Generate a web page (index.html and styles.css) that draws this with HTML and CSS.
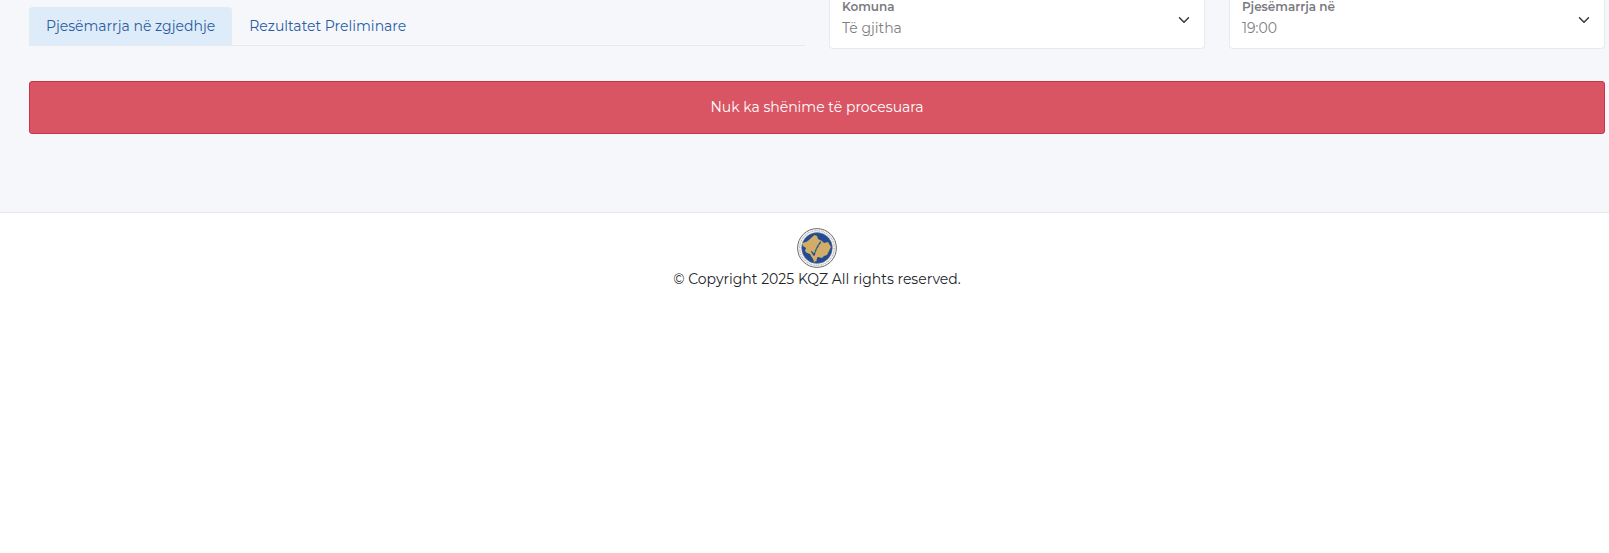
FILE: index.html
```
<!DOCTYPE html>
<html lang="sq">
<head>
<meta charset="utf-8">
<meta name="viewport" content="width=device-width, initial-scale=1">
<title>KQZ</title>
<link rel="stylesheet" href="styles.css">
</head>
<body>
<main class="content">
  <div class="toolbar">
    <nav class="tabs">
      <a class="tab tab-active" href="#pjesemarrja">Pjesëmarrja në zgjedhje</a>
      <a class="tab" href="#rezultatet">Rezultatet Preliminare</a>
    </nav>
    <div class="field">
      <select class="field-select" id="komuna"><option>Të gjitha</option></select>
      <label class="field-label" for="komuna">Komuna</label>
      <svg class="chevron" viewBox="0 0 16 16" aria-hidden="true"><path d="m2 5 6 6 6-6"/></svg>
    </div>
    <div class="field">
      <select class="field-select" id="ora"><option>19:00</option></select>
      <label class="field-label" for="ora">Pjesëmarrja në</label>
      <svg class="chevron" viewBox="0 0 16 16" aria-hidden="true"><path d="m2 5 6 6 6-6"/></svg>
    </div>
  </div>
  <div class="alert" role="alert">Nuk ka shënime të procesuara</div>
</main>
<footer class="footer">
  <svg class="logo" viewBox="0 0 40 40" role="img" aria-label="KQZ">
    <circle cx="20" cy="20" r="19.4" fill="#f5f5f5" stroke="#6c6e72" stroke-width="1"/>
    <circle cx="20" cy="20" r="17.3" fill="none" stroke="#b9b9bb" stroke-width="1.4" stroke-dasharray="1.2 .8 .7 .9"/>
    <circle cx="20" cy="20" r="15.4" fill="#234b91" stroke="#777f8f" stroke-width=".5"/>
    <path fill="#d1ad68" d="M17.5 7l2.5 1 1 3 4 2 2 2 4-1 3 5-2 4-2 4-3 1-2 2-4-1-1 1-.5 3-2.500 1-1-3-2-3-1-2-3-1-2-2 1-3-3-2-1-3 4-1 3-2 2-2z"/>
    <path fill="#234b91" d="M13.800 23.500l1.200-.5 2.300 3 -.5 2z"/>
    <path fill="none" stroke="#234b91" stroke-width="1.300" stroke-dasharray="3.500 .4" d="M17 27.500Q19 20 24 13.500"/>
  </svg>
  <div>© Copyright 2025 KQZ All rights reserved.</div>
</footer>
</body>
</html>
```
FILE: styles.css
```
* { box-sizing: border-box; }
body {
  margin: 0;
  background: #fff;
  color: #212529;
  font: 14px/22px Montserrat, Inter, sans-serif;
}
.content {
  padding: 0 4px 78px 29px;
  background: #f5f7fb;
  border-bottom: 1px solid #e6e8ee;
}
.toolbar {
  display: grid;
  grid-template-columns: repeat(4, minmax(0, 1fr));
  column-gap: 24px;
  align-items: start;
}
.tabs {
  grid-column: span 2;
  display: flex;
  margin-top: 7px;
  border-bottom: 1px solid #e5ebf0;
}
.tab {
  padding: 7px 16px 8px;
  border: 1px solid transparent;
  border-bottom: 0;
  border-radius: 4px 4px 0 0;
  color: #2a5ca5;
  text-decoration: none;
}
.tab-active {
  background: #deebf8;
  border-color: #e2ecf3;
}
.field { position: relative; }
.field-select {
  display: block;
  width: 100%;
  height: 49px;
  padding: 16px 36px 8px 12px;
  appearance: none;
  border: 1px solid #e3ecef;
  border-top: 0;
  border-radius: 0 0 4px 4px;
  background: #fff;
  color: #7d7e82;
  font: inherit;
}
.field-label {
  position: absolute;
  top: -1px;
  left: 13px;
  color: #7a7b80;
  font-size: 12px;
  font-weight: 600;
  line-height: 16px;
  pointer-events: none;
}
.chevron {
  position: absolute;
  top: 14px;
  right: 15px;
  width: 12px;
  height: 12px;
  fill: none;
  stroke: #343a40;
  stroke-width: 2;
  stroke-linecap: round;
  stroke-linejoin: round;
  pointer-events: none;
}
.alert {
  margin-top: 32px;
  padding: 14px 16px 15px;
  border: 1px solid #cb3446;
  border-radius: 3px;
  background: #d95563;
  color: #fff;
  text-align: center;
}
.footer {
  padding: 15px 4px 16px 29px;
  text-align: center;
}
.logo {
  display: block;
  width: 40px;
  height: 40px;
  margin: 0 auto;
}
```
